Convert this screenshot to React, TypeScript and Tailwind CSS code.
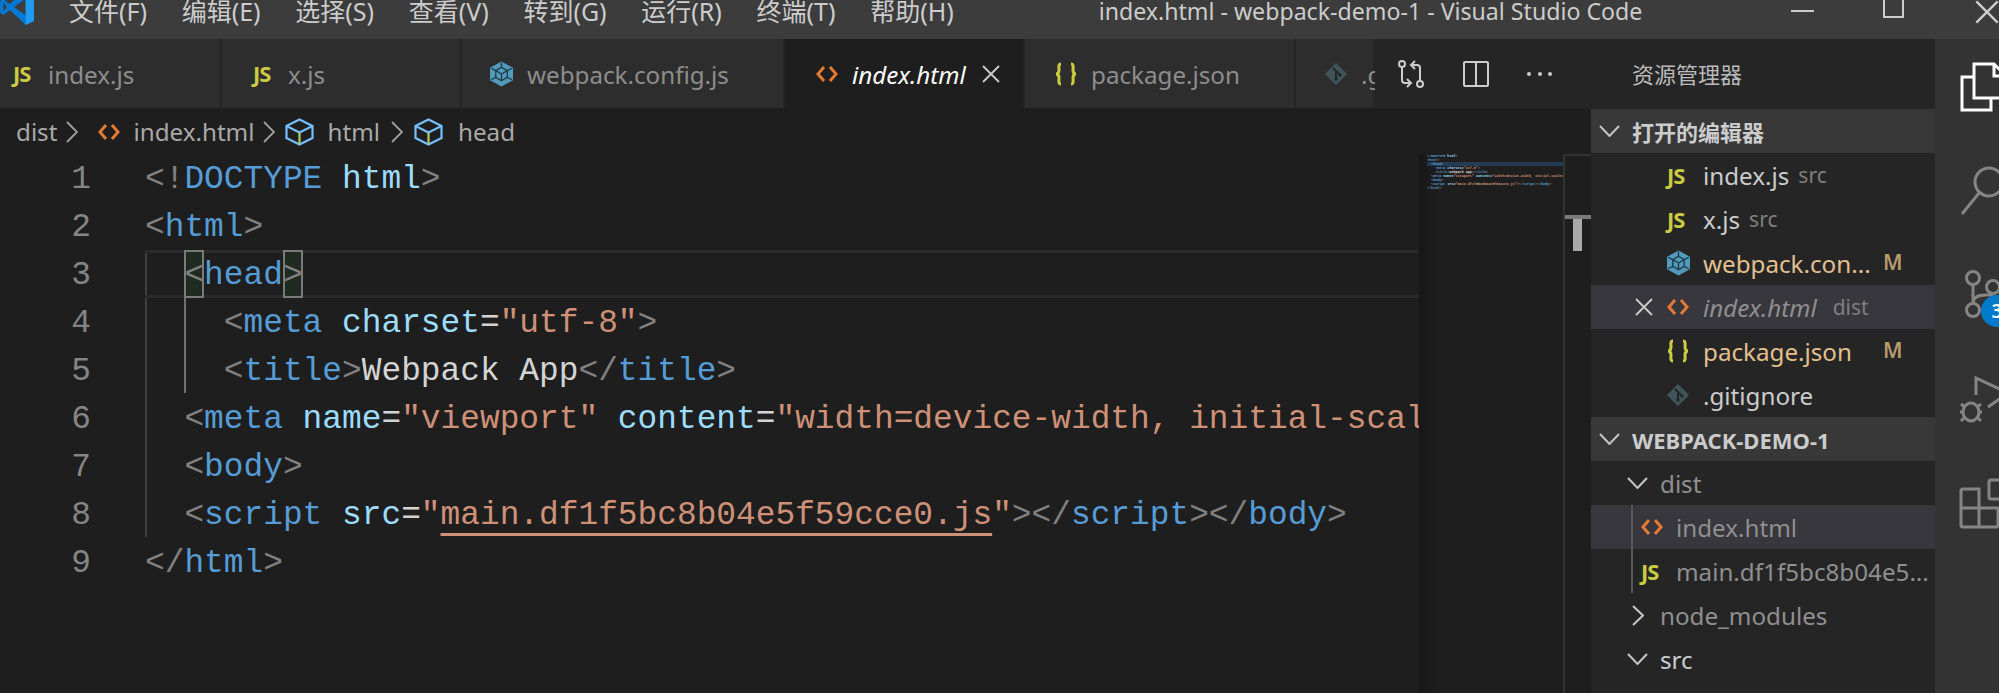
import type { ReactNode } from "react";

const uiFont = "font-['Noto_Sans','Noto_Sans_CJK_SC',sans-serif]";

const menus = ["文件(F)", "编辑(E)", "选择(S)", "查看(V)", "转到(G)", "运行(R)", "终端(T)", "帮助(H)"];

function JsIcon() {
  return <span className="w-[21px] shrink-0 text-[22px] font-bold tracking-[-1px] text-[#cbcb41]">JS</span>;
}

function HtmlIcon() {
  return (
    <svg viewBox="0 0 22 22" className="h-[22px] w-[22px] shrink-0" fill="none" stroke="#e37933" strokeWidth="3">
      <path d="M8 4 L2 11 L8 18 M14 4 L20 11 L14 18" />
    </svg>
  );
}

function BracesIcon() {
  return (
    <svg viewBox="0 0 22 24" className="h-[24px] w-[22px] shrink-0" fill="none" stroke="#cbcb41" strokeWidth="3">
      <path d="M6 2 C3 2 4 5 4 8 C4 10 3 12 1 12 C3 12 4 14 4 16 C4 19 3 22 6 22" />
      <path d="M16 2 C19 2 18 5 18 8 C18 10 19 12 21 12 C19 12 18 14 18 16 C18 19 19 22 16 22" />
    </svg>
  );
}

function WebpackIcon() {
  return (
    <svg viewBox="0 0 24 26" className="h-[26px] w-[23px] shrink-0">
      <path d="M12 0 L24 6.5 V19.5 L12 26 L0 19.5 V6.5 Z" fill="#519aba" />
      <path d="M12 6 L18 9.5 V16.5 L12 20 L6 16.5 V9.5 Z M6 9.5 L12 13 L18 9.5 M12 13 V20 M12 1 V6 M1 7 L6 9.5 M23 7 L18 9.5 M1 19 L6 16.5 M23 19 L18 16.5" fill="none" stroke="#1e3a48" strokeWidth="1.4" />
    </svg>
  );
}

function GitIcon() {
  return (
    <svg viewBox="0 0 22 22" className="h-[22px] w-[22px] shrink-0">
      <path d="M11 0 L22 11 L11 22 L0 11 Z" fill="#41535b" />
      <path d="M8 5 L15 12 M11 8 V16" stroke="#252526" strokeWidth="2" />
      <circle cx="11" cy="16" r="1.8" fill="#252526" />
      <circle cx="15" cy="12" r="1.8" fill="#252526" />
    </svg>
  );
}

function CubeIcon() {
  return (
    <svg viewBox="0 0 29 28" className="h-[28px] w-[29px] shrink-0" fill="none" stroke="#75beff" strokeWidth="2.2">
      <path d="M14.5 1.5 L27.5 8 V20 L14.5 26.5 L1.5 20 V8 Z" />
      <path d="M1.5 8 L14.5 14.5 L27.5 8" />
      <path d="M14.5 14.5 V26.5" stroke="#b5c96a" />
    </svg>
  );
}

function Crumb() {
  return (
    <svg viewBox="0 0 12 22" className="h-[22px] w-[12px] shrink-0" fill="none" stroke="#a0a0a0" strokeWidth="1.8">
      <path d="M1 1 L11 11 L1 21" />
    </svg>
  );
}

function ChevronDown({ color = "#c5c5c5" }: { color?: string }) {
  return (
    <svg viewBox="0 0 21 12" className="h-[12px] w-[21px] shrink-0" fill="none" stroke={color} strokeWidth="2">
      <path d="M1 1 L10.5 11 L20 1" />
    </svg>
  );
}

function ChevronRight() {
  return (
    <svg viewBox="0 0 12 21" className="h-[21px] w-[12px] shrink-0" fill="none" stroke="#c5c5c5" strokeWidth="2">
      <path d="M1 1 L11 10.5 L1 20" />
    </svg>
  );
}

function CloseIcon({ size = 18, color = "#cccccc" }: { size?: number; color?: string }) {
  return (
    <svg viewBox="0 0 18 18" width={size} height={size} className="shrink-0" fill="none" stroke={color} strokeWidth="1.8">
      <path d="M1 1 L17 17 M17 1 L1 17" />
    </svg>
  );
}

function Tab({ width, icon, label, active }: { width: string; icon: ReactNode; label: string; active?: boolean }) {
  return (
    <div className={`${width} flex h-full shrink-0 items-center gap-[14px] border-r-2 border-[#252526] ${active ? "bg-[#1e1e1e] pl-[31px] text-white italic" : "bg-[#2d2d2d] text-[#8d8d8d]"}`}>
      {icon}
      <span className="whitespace-nowrap pt-[3px]">{label}</span>
      {active && <span className="ml-[2px] not-italic"><CloseIcon /></span>}
    </div>
  );
}

const P = "text-[#808080]";
const T = "text-[#569cd6]";
const A = "text-[#9cdcfe]";
const S = "text-[#ce9178]";
const W = "text-[#d4d4d4]";

type Seg = [string, string];

const code: Seg[][] = [
  [[P, "<!"], [T, "DOCTYPE"], [A, " html"], [P, ">"]],
  [[P, "<"], [T, "html"], [P, ">"]],
  [[W, "  "], [P, "<"], [T, "head"], [P, ">"]],
  [[W, "    "], [P, "<"], [T, "meta"], [A, " charset"], [W, "="], [S, "\"utf-8\""], [P, ">"]],
  [[W, "    "], [P, "<"], [T, "title"], [P, ">"], [W, "Webpack App"], [P, "</"], [T, "title"], [P, ">"]],
  [[W, "  "], [P, "<"], [T, "meta"], [A, " name"], [W, "="], [S, "\"viewport\""], [A, " content"], [W, "="], [S, "\"width=device-width, initial-scale=1\""], [P, ">"]],
  [[W, "  "], [P, "<"], [T, "body"], [P, ">"]],
  [[W, "  "], [P, "<"], [T, "script"], [A, " src"], [W, "="], [S, "\"main.df1f5bc8b04e5f59cce0.js\""], [P, "></"], [T, "script"], [P, "></"], [T, "body"], [P, ">"]],
  [[P, "</"], [T, "html"], [P, ">"]],
];

function Bracket({ ch }: { ch: string }) {
  return <span className="relative z-10 inline-block h-[48px] bg-[#1f2a20] text-[#808080] outline-2 -outline-offset-2 outline-[#7a7a7a]">{ch}</span>;
}

function CodeLine({ line, index }: { line: Seg[]; index: number }) {
  if (index === 2) {
    return (
      <div className="relative h-[48px] whitespace-pre leading-[52px]">
        <div className="absolute inset-0 border-y-[3px] border-[#2a2a2a]" />
        {"  "}
        <Bracket ch="<" />
        <span className={T}>head</span>
        <Bracket ch=">" />
      </div>
    );
  }
  return (
    <div className="h-[48px] whitespace-pre leading-[52px]">
      {line.map(([cls, text], i) => {
        if (index === 7 && text.startsWith("\"main")) {
          return (
            <span key={i} className={cls}>
              "<span className="underline decoration-[3px] underline-offset-[9px] [text-decoration-skip-ink:none]">main.df1f5bc8b04e5f59cce0.js</span>"
            </span>
          );
        }
        return <span key={i} className={cls}>{text}</span>;
      })}
    </div>
  );
}

function Row({ pl, icon, name, desc, descMl = "ml-[-6px]", badge, color = "text-[#cccccc]", bg, italic, close, guide }: {
  pl: string;
  icon?: ReactNode;
  name: string;
  desc?: string;
  descMl?: string;
  badge?: boolean;
  color?: string;
  bg?: string;
  italic?: boolean;
  close?: boolean;
  guide?: boolean;
}) {
  return (
    <div className={`relative flex h-[44px] items-center ${pl} ${bg ?? ""}`}>
      {guide && <div className="absolute top-0 left-[40px] h-full w-[2px] bg-[#585858]" />}
      {close && <span className="-ml-[32px]"><CloseIcon /></span>}
      {icon}
      <span className={`whitespace-nowrap pt-[2px] ${color} ${italic ? "italic" : ""}`}>{name}</span>
      {desc && <span className={`${descMl} pt-[2px] text-[21px] text-[#7f7f7f]`}>{desc}</span>}
      {badge && <span className="absolute left-[292px] text-[21px] font-semibold text-[#b89b6e]">M</span>}
    </div>
  );
}

function SectionHeader({ title }: { title: string }) {
  return (
    <div className="flex h-[44px] items-center gap-[12px] bg-[#383838] pl-[8px] text-[22px] font-bold text-[#cccccc]">
      <ChevronDown />
      <span className="whitespace-nowrap pt-[2px]">{title}</span>
    </div>
  );
}

function ActivityIcon({ children }: { children: ReactNode }) {
  return (
    <svg viewBox="0 0 48 48" className="h-[48px] w-[48px] shrink-0 overflow-visible" fill="none" stroke="#858585" strokeWidth="3">
      {children}
    </svg>
  );
}

export default function App() {
  return (
    <div className={`flex h-[693px] w-[1999px] flex-col overflow-hidden bg-[#1e1e1e] text-[24.2px] ${uiFont}`}>
      {/* title bar, cropped at the top in the shot */}
      <div className="relative flex h-[39px] shrink-0 items-start overflow-hidden bg-[#3c3c3c] text-[#cccccc]">
        <svg viewBox="0 0 100 100" className="-mt-[11px] ml-[-1px] h-[36px] w-[36px] shrink-0">
          <path fillRule="evenodd" d="M74 0 L97 11 V89 L74 100 L30 58 L12 72 L3 67 V33 L12 28 L30 42 Z M74 27 L42 50 L74 73 Z M12 38 V62 L22 50 Z" fill="#0078d4" />
          <path d="M74 0 L97 11 V89 L74 100 Z" fill="#1f9cf0" />
        </svg>
        <div className="ml-[34px] flex gap-[34.7px] text-[25px] leading-[22px]">
          {menus.map((m) => <span key={m} className="whitespace-nowrap">{m}</span>)}
        </div>
        <span className="ml-[145px] whitespace-nowrap text-[23.15px] leading-[22px]">index.html - webpack-demo-1 - Visual Studio Code</span>
        <div className="ml-[149px] mt-[10px] h-[2px] w-[23px] shrink-0 bg-[#cccccc]" />
        <div className="ml-[69px] -mt-[2px] h-[20px] w-[21px] shrink-0 border-2 border-[#cccccc]" />
        <div className="ml-[71px] shrink-0"><CloseIcon size={24} /></div>
      </div>

      <div className="flex min-h-0 flex-1">
        {/* editor column */}
        <div className="flex w-[1591px] shrink-0 flex-col">
          <div className="flex h-[70px] shrink-0">
            <div className="flex w-[1375px] shrink-0 overflow-hidden pb-[1px]">
              <Tab width="w-[222px] pl-[13px]" icon={<JsIcon />} label="index.js" />
              <Tab width="w-[240px] pl-[31px]" icon={<JsIcon />} label="x.js" />
              <Tab width="w-[323px] pl-[28px]" icon={<WebpackIcon />} label="webpack.config.js" />
              <Tab width="w-[240px]" icon={<HtmlIcon />} label="index.html" active />
              <Tab width="w-[271px] pl-[30px]" icon={<BracesIcon />} label="package.json" />
              <Tab width="w-[79px] pl-[29px]" icon={<GitIcon />} label=".gitignore" />
            </div>
            <div className="flex flex-1 items-center bg-[#252526] pl-[23px]">
              <svg viewBox="0 0 26 28" className="h-[28px] w-[26px] shrink-0" fill="none" stroke="#cccccc" strokeWidth="2">
                <circle cx="4" cy="4" r="3" />
                <path d="M4 7 V20 C4 22 5 23 7 23 H13 M9 19 L13 23 L9 27" />
                <circle cx="22" cy="24" r="3" />
                <path d="M22 21 V8 C22 6 21 5 19 5 H13 M17 1 L13 5 L17 9" />
              </svg>
              <div className="ml-[39px] flex h-[26px] w-[26px] shrink-0 justify-center rounded-[2px] border-2 border-[#cccccc]">
                <div className="h-full w-[2px] bg-[#cccccc]" />
              </div>
              <div className="ml-[38px] flex w-[25px] shrink-0 justify-between">
                <div className="h-[4px] w-[4px] rounded-full bg-[#cccccc]" />
                <div className="h-[4px] w-[4px] rounded-full bg-[#cccccc]" />
                <div className="h-[4px] w-[4px] rounded-full bg-[#cccccc]" />
              </div>
            </div>
          </div>

          <div className="flex h-[45px] shrink-0 items-center pl-[16px] text-[#a9a9a9]">
            <span className="pt-[2px]">dist</span>
            <span className="ml-[9px]"><Crumb /></span>
            <span className="ml-[20px]"><HtmlIcon /></span>
            <span className="ml-[13px] pt-[2px]">index.html</span>
            <span className="ml-[9px]"><Crumb /></span>
            <span className="ml-[10px]"><CubeIcon /></span>
            <span className="ml-[13px] pt-[2px]">html</span>
            <span className="ml-[11px]"><Crumb /></span>
            <span className="ml-[11px]"><CubeIcon /></span>
            <span className="ml-[15px] pt-[2px]">head</span>
          </div>

          <div className="flex min-h-0 flex-1">
            <div className="w-[145px] shrink-0 pr-[54px] text-right font-['Liberation_Mono',monospace] text-[32.83px] leading-[52px] text-[#858585]">
              {code.map((_, i) => <div key={i} className="h-[48px]">{i + 1}</div>)}
            </div>
            <div className="relative min-w-0 flex-1 overflow-hidden font-['Liberation_Mono',monospace] text-[32.83px]">
              <div className="absolute top-[96px] left-0 h-[287px] w-[2px] bg-[#404040]" />
              <div className="absolute top-[143px] left-[39px] h-[96px] w-[2px] bg-[#707070]" />
              {code.map((line, i) => <CodeLine key={i} line={line} index={i} />)}
            </div>
            {/* minimap */}
            <div className="flex w-[172px] shrink-0">
              <div className="relative w-[144px] overflow-hidden bg-[linear-gradient(90deg,#171717_0,#1e1e1e_20px)] pl-[8px] font-['Liberation_Mono',monospace] text-[3.4px] leading-[4px] font-bold" aria-hidden>
                <div className="absolute top-[8px] right-0 left-[8px] h-[4px] bg-[#264f78]/60" />
                {code.map((line, i) => (
                  <div key={i} className="relative h-[4px] whitespace-pre">
                    {line.map(([cls, text], j) => <span key={j} className={cls}>{text}</span>)}
                  </div>
                ))}
              </div>
              <div className="relative flex-1 border-t-2 border-l-2 border-[#333333]">
                <div className="mt-[59px] h-[4px] bg-[#7a7a7a]" />
                <div className="ml-[8px] h-[32px] w-[9px] bg-[#a8a8a8]" />
              </div>
            </div>
          </div>
        </div>

        {/* explorer */}
        <div className="w-[344px] shrink-0 bg-[#252526]">
          <div className="flex h-[70px] items-center pl-[41px] text-[22px] text-[#bbbbbb]">资源管理器</div>
          <SectionHeader title="打开的编辑器" />
          <Row pl="pl-[76px] gap-[15px]" icon={<JsIcon />} name="index.js" desc="src" />
          <Row pl="pl-[76px] gap-[15px]" icon={<JsIcon />} name="x.js" desc="src" />
          <Row pl="pl-[76px] gap-[13px]" icon={<WebpackIcon />} name="webpack.con..." color="text-[#e2c08d]" badge />
          <Row pl="pl-[76px] gap-[14px]" icon={<HtmlIcon />} name="index.html" desc="dist" descMl="ml-[2px]" color="text-[#8f8f8f]" bg="bg-[#37373d]" italic close />
          <Row pl="pl-[76px] gap-[14px]" icon={<BracesIcon />} name="package.json" color="text-[#e2c08d]" badge />
          <Row pl="pl-[76px] gap-[14px]" icon={<GitIcon />} name=".gitignore" />
          <SectionHeader title="WEBPACK-DEMO-1" />
          <Row pl="pl-[36px] gap-[12px]" icon={<ChevronDown />} name="dist" color="text-[#8f8f8f]" />
          <Row pl="pl-[50px] gap-[13px]" icon={<HtmlIcon />} name="index.html" color="text-[#8f8f8f]" bg="bg-[#37373d]" guide />
          <Row pl="pl-[50px] gap-[14px]" icon={<JsIcon />} name="main.df1f5bc8b04e5..." color="text-[#8f8f8f]" guide />
          <Row pl="pl-[41px] gap-[16px]" icon={<ChevronRight />} name="node_modules" color="text-[#8f8f8f]" />
          <Row pl="pl-[36px] gap-[12px]" icon={<ChevronDown />} name="src" />
        </div>

        {/* activity bar */}
        <div className="relative flex flex-1 flex-col gap-[56px] bg-[#333333] pt-[24px] pl-[25px]">
          <ActivityIcon>
            <g stroke="#ffffff">
              <path d="M14 1 H34 L46 13 V35 H14 Z M34 1 V13 H46" />
              <path d="M14 14 H2 V47 H31 V35" />
            </g>
          </ActivityIcon>
          <ActivityIcon>
            <circle cx="29" cy="15" r="14" />
            <path d="M19 26 L2 47" />
          </ActivityIcon>
          <ActivityIcon>
            <circle cx="13" cy="7" r="6.5" />
            <circle cx="13" cy="39" r="6.5" />
            <circle cx="33" cy="16" r="6.5" />
            <path d="M13 13.5 V32.5 M13 32 C13 26 18 24 26 24 C30 24 33 24 33 22.5" />
          </ActivityIcon>
          <ActivityIcon>
            <path d="M16 20 V3 L48 18 L28 32" />
            <ellipse cx="11" cy="37" rx="8" ry="9" />
            <path d="M1 29 L5 32 M21 29 L17 32 M0 37 H3 M19 37 H22 M1 46 L5 42 M21 46 L17 42" />
          </ActivityIcon>
          <ActivityIcon>
            <path d="M3 10 H19 V48 H3 A2 2 0 0 1 1 46 V12 A2 2 0 0 1 3 10 Z M1 29 H38 V46 A2 2 0 0 1 36 48 H19" />
            <rect x="29" y="1" width="20" height="19" rx="2" />
          </ActivityIcon>
          <div className="absolute top-[256px] left-[46px] flex h-[32px] w-[32px] items-center justify-center rounded-full bg-[#007acc] text-[19px] font-semibold text-white">3</div>
        </div>
      </div>
    </div>
  );
}
